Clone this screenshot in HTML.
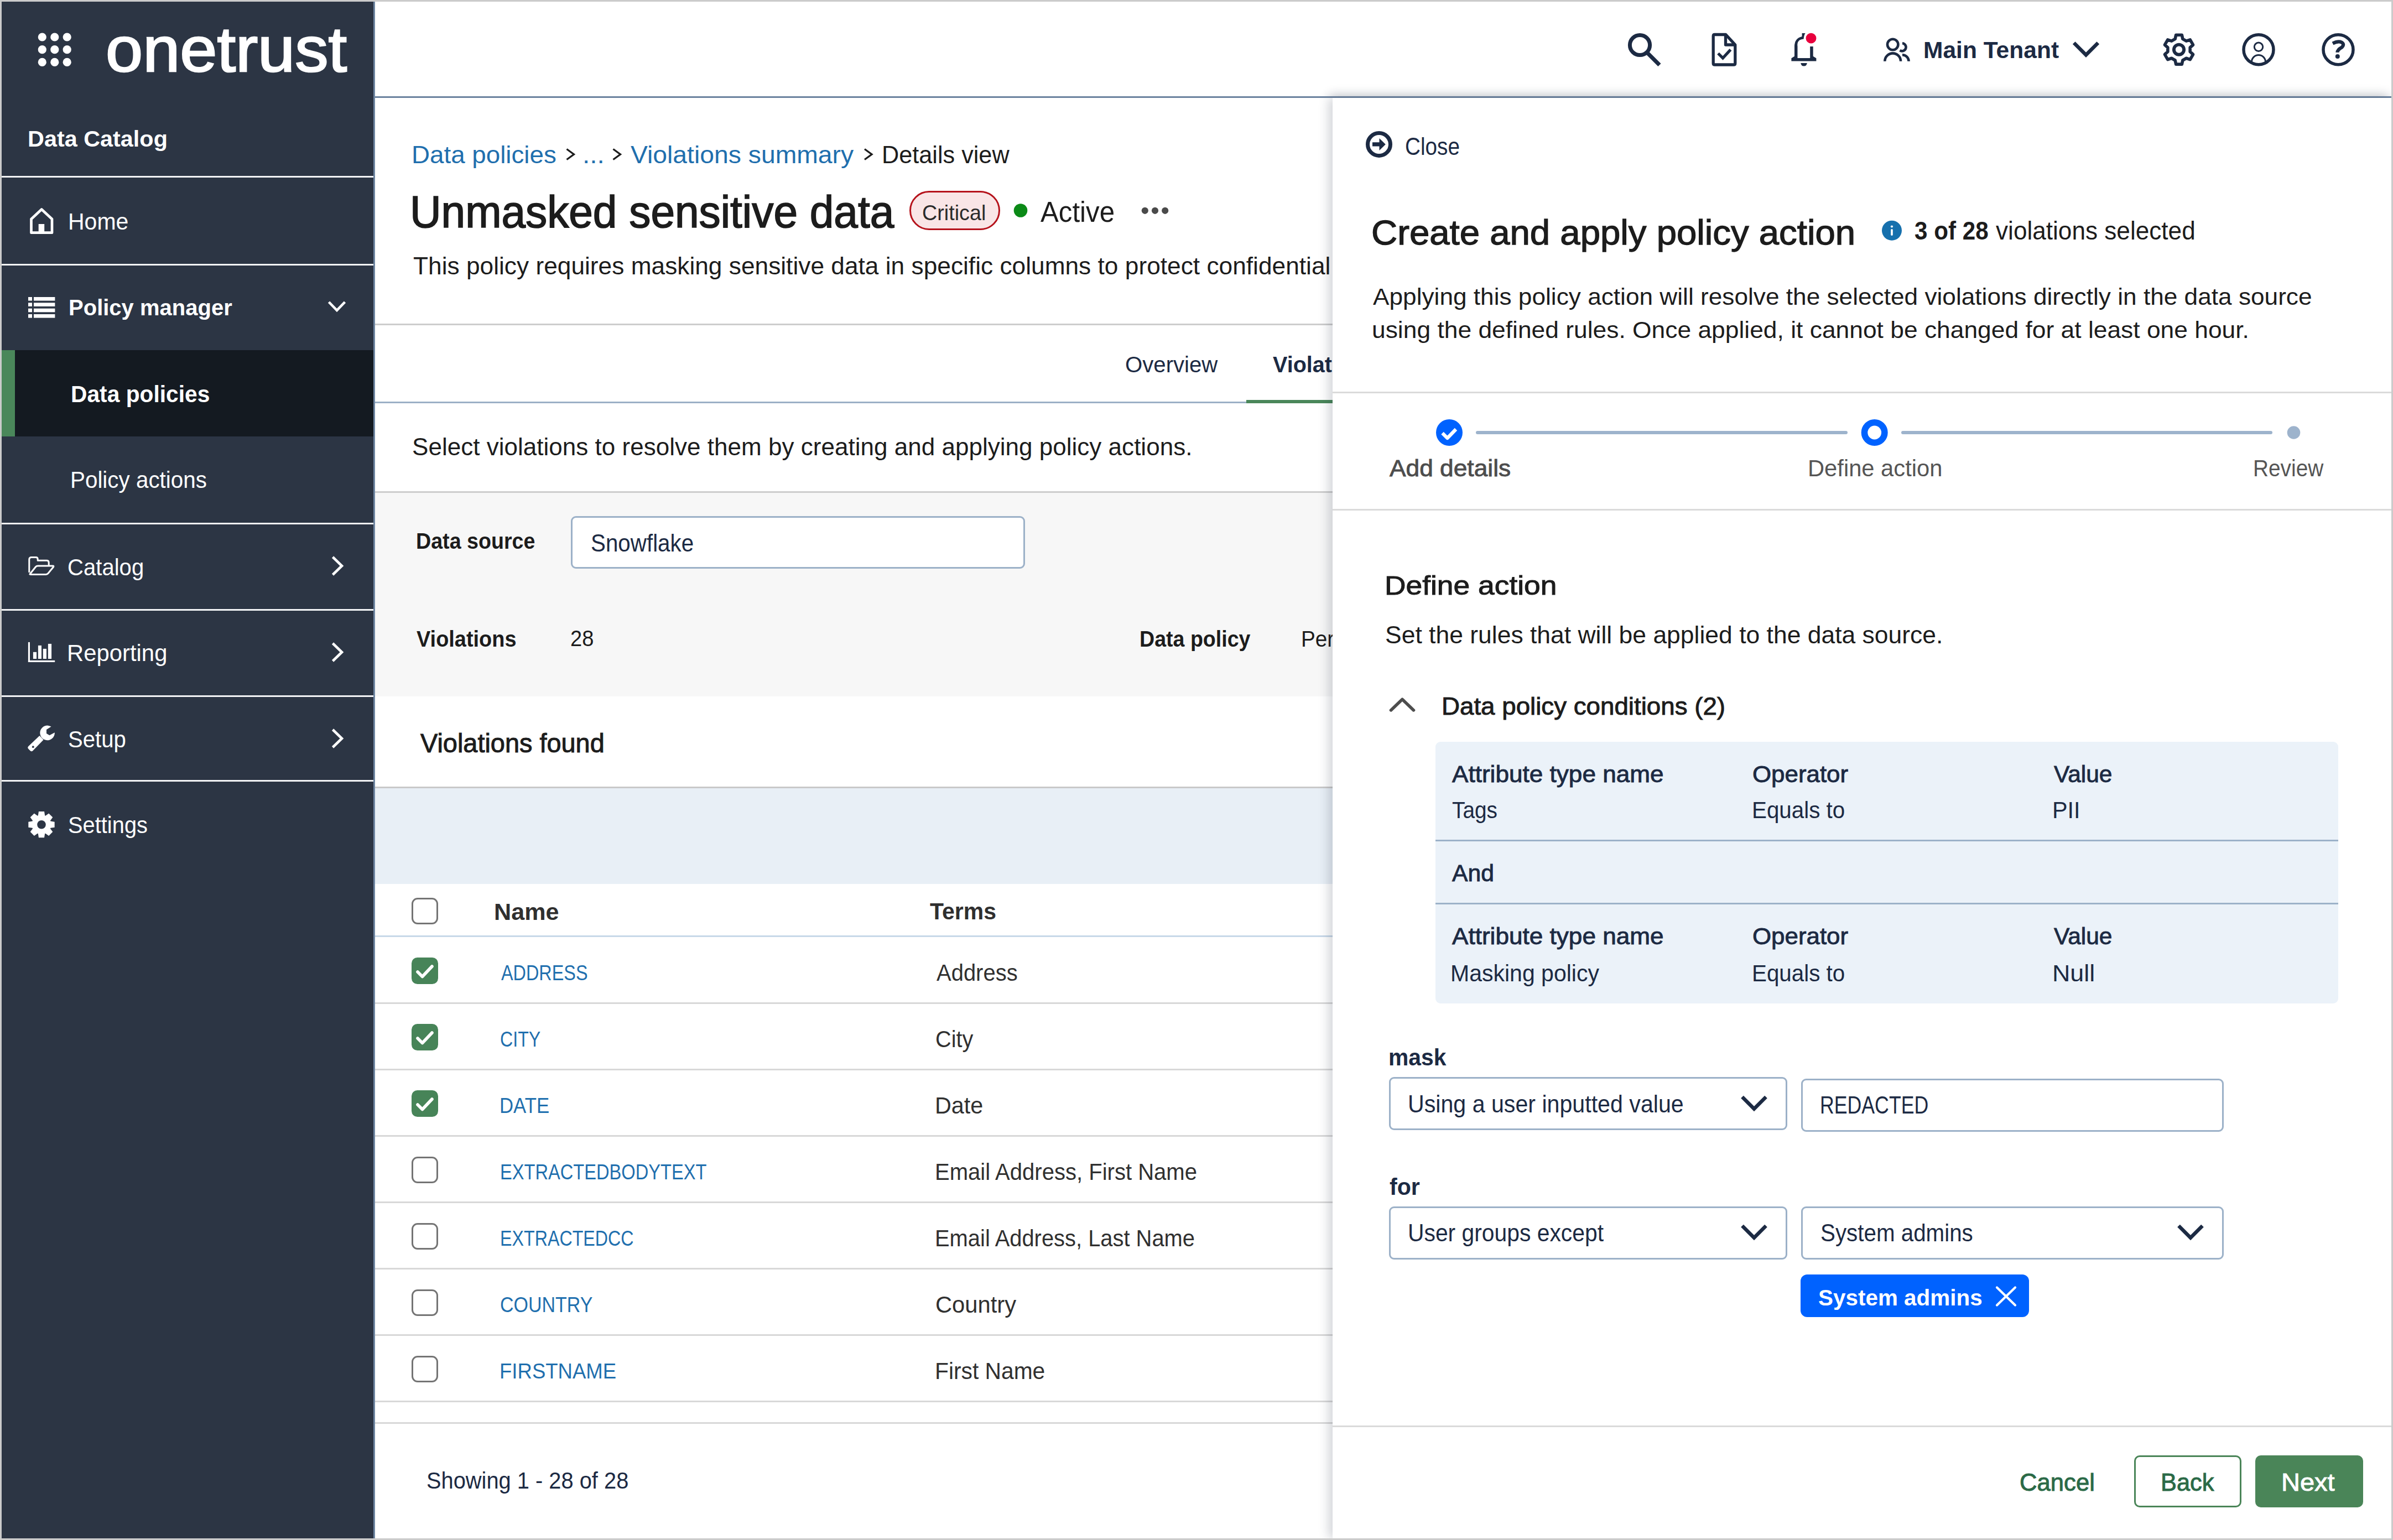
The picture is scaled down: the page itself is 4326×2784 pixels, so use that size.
<!DOCTYPE html><html><head><meta charset="utf-8"><style>html,body{margin:0;padding:0;}body{width:4326px;height:2784px;position:relative;overflow:hidden;background:#cbcbcb;font-family:"Liberation Sans",sans-serif;}.c{position:absolute;overflow:hidden;}.t{position:absolute;white-space:nowrap;margin:0;transform-origin:0 0;}</style></head><body><div style="position:absolute;left:3px;top:3px;width:4320px;height:2778px;overflow:hidden;"><div style="position:absolute;left:-3px;top:-3px;width:4326px;height:2784px;"><div class="c" style="left:3px;top:3px;width:675px;height:2778px;background:#2c3544;"><svg style="position:absolute;left:-3px;top:-3px;overflow:visible" width="200" height="200" viewBox="0 0 200 200"><circle cx="76.3" cy="67" r="7.6" fill="#fff"/><circle cx="76.3" cy="89.7" r="7.6" fill="#fff"/><circle cx="76.3" cy="112.4" r="7.6" fill="#fff"/><circle cx="98.8" cy="67" r="7.6" fill="#fff"/><circle cx="98.8" cy="89.7" r="7.6" fill="#fff"/><circle cx="98.8" cy="112.4" r="7.6" fill="#fff"/><circle cx="121.2" cy="67" r="7.6" fill="#fff"/><circle cx="121.2" cy="89.7" r="7.6" fill="#fff"/><circle cx="121.2" cy="112.4" r="7.6" fill="#fff"/></svg><div style="position:absolute;left:0px;top:315px;width:672px;height:3px;background:#f4f5f7;"></div><div style="position:absolute;left:0px;top:474px;width:672px;height:3px;background:#f4f5f7;"></div><div style="position:absolute;left:0px;top:942px;width:672px;height:3px;background:#f4f5f7;"></div><div style="position:absolute;left:0px;top:1098px;width:672px;height:3px;background:#f4f5f7;"></div><div style="position:absolute;left:0px;top:1254px;width:672px;height:3px;background:#f4f5f7;"></div><div style="position:absolute;left:0px;top:1407px;width:672px;height:3px;background:#f4f5f7;"></div><div style="position:absolute;left:0px;top:630px;width:672px;height:156px;background:#141a21;"></div><div style="position:absolute;left:0px;top:630px;width:24px;height:156px;background:#4a875a;"></div><svg style="position:absolute;left:0;top:0;overflow:visible" width="675" height="2778" viewBox="3 3 675 2778"><path d="M56.5 420.7 V396 L75.2 378.5 L94 396 V420.7 Z" fill="none" stroke="#fff" stroke-width="4.7" stroke-linejoin="round"/><rect x="69.7" y="405" width="10.5" height="14" fill="#fff"/><rect x="51" y="537" width="7" height="6.6" fill="#fff"/><rect x="61" y="537" width="38.4" height="6.6" fill="#fff"/><rect x="51" y="547.3" width="7" height="6.6" fill="#fff"/><rect x="61" y="547.3" width="38.4" height="6.6" fill="#fff"/><rect x="51" y="557.7" width="7" height="6.6" fill="#fff"/><rect x="61" y="557.7" width="38.4" height="6.6" fill="#fff"/><rect x="51" y="568" width="7" height="6.6" fill="#fff"/><rect x="61" y="568" width="38.4" height="6.6" fill="#fff"/><polyline points="594.5,546 609,561 623.5,546" fill="none" stroke="#fff" stroke-width="4.6"/><polyline points="601.5,1007 618,1023 601.5,1039" fill="none" stroke="#fff" stroke-width="4.6"/><polyline points="601.5,1163 618,1179 601.5,1195" fill="none" stroke="#fff" stroke-width="4.6"/><polyline points="601.5,1319 618,1335 601.5,1351" fill="none" stroke="#fff" stroke-width="4.6"/><g transform="translate(40,990)"><path d="M12.8 45 V21.5 Q12.8 17.5 16.8 17.5 H25 Q28.2 17.5 28.2 21 V23.3 H44.3 Q48.2 23.3 48.2 27.2 V33" fill="none" stroke="#fff" stroke-width="3" stroke-linejoin="round"/><path d="M14.3 47.5 L24.5 34.8 Q26 33 28.5 33 H55.5 Q57.7 33 56.5 35 L47 46.5 Q45.5 48.4 43 48.4 H16 Q13 48.4 14.3 47.5 Z" fill="none" stroke="#fff" stroke-width="3" stroke-linejoin="round"/></g><g transform="translate(40,1150)" fill="#fff"><rect x="10.9" y="10.9" width="3.1" height="36.1"/><rect x="10.9" y="43.9" width="48.3" height="3.1"/><rect x="19.9" y="28.8" width="6.2" height="12.2"/><rect x="28.9" y="16.9" width="6.1" height="24.1"/><rect x="37.8" y="22.9" width="6.2" height="18.1"/><rect x="46.9" y="13.9" width="6.2" height="27.1"/></g><g transform="translate(40,1300)"><path d="M52.6 13.6 A13.3 13.3 0 1 0 58.9 24.3 L49.5 29.3 L44 26 V19 Z" fill="#fff"/><path d="M31.5 30 L38.5 37.5 L19.5 57 Q17 59.5 14.5 57 L11.5 54 Q9 51.5 11.5 49 Z" fill="#fff"/><circle cx="19.8" cy="50.2" r="1.9" fill="#2c3544"/></g></svg><svg style="position:absolute;left:0;top:0;overflow:visible" width="675" height="2778" viewBox="3 3 675 2778"><path d="M68.84 1474.32 L69.96 1467.03 L80.04 1467.03 L81.16 1474.32 L82.22 1474.76 L88.17 1470.40 L95.30 1477.53 L90.94 1483.48 L91.38 1484.54 L98.67 1485.66 L98.67 1495.74 L91.38 1496.86 L90.94 1497.92 L95.30 1503.87 L88.17 1511.00 L82.22 1506.64 L81.16 1507.08 L80.04 1514.37 L69.96 1514.37 L68.84 1507.08 L67.78 1506.64 L61.83 1511.00 L54.70 1503.87 L59.06 1497.92 L58.62 1496.86 L51.33 1495.74 L51.33 1485.66 L58.62 1484.54 L59.06 1483.48 L54.70 1477.53 L61.83 1470.40 L67.78 1474.76 Z" fill="#fff"/><circle cx="75" cy="1490.7" r="7.8" fill="#2c3544"/></svg><div style="position:absolute;left:672px;top:0px;width:3px;height:2778px;background:#6d84a0;"></div><div class="t" style="left:187.8px;top:29.2px;font-size:115.00px;line-height:115.00px;font-weight:400;color:#fff;transform:scaleX(1.0496);-webkit-text-stroke:2.6px #fff;">onetrust</div><div class="t" style="left:47.0px;top:227.5px;font-size:40.70px;line-height:40.70px;font-weight:700;color:#fff;transform:scaleX(1.0170);">Data Catalog</div><div class="t" style="left:120.1px;top:376.9px;font-size:42.15px;line-height:42.15px;font-weight:400;color:#fff;transform:scaleX(0.9725);">Home</div><div class="t" style="left:121.0px;top:533.2px;font-size:40.70px;line-height:40.70px;font-weight:700;color:#fff;transform:scaleX(0.9835);">Policy manager</div><div class="t" style="left:125.1px;top:689.3px;font-size:42.15px;line-height:42.15px;font-weight:700;color:#fff;transform:scaleX(0.9668);">Data policies</div><div class="t" style="left:124.1px;top:844.3px;font-size:42.15px;line-height:42.15px;font-weight:400;color:#fff;transform:scaleX(0.9583);">Policy actions</div><div class="t" style="left:119.1px;top:1002.3px;font-size:42.15px;line-height:42.15px;font-weight:400;color:#fff;transform:scaleX(0.9516);">Catalog</div><div class="t" style="left:118.0px;top:1157.3px;font-size:42.15px;line-height:42.15px;font-weight:400;color:#fff;transform:scaleX(0.9928);">Reporting</div><div class="t" style="left:120.0px;top:1313.3px;font-size:42.15px;line-height:42.15px;font-weight:400;color:#fff;transform:scaleX(0.9518);">Setup</div><div class="t" style="left:120.1px;top:1468.3px;font-size:42.15px;line-height:42.15px;font-weight:400;color:#fff;transform:scaleX(0.9454);">Settings</div></div><div class="c" style="left:678px;top:3px;width:3645px;height:174px;background:#fff;"><div style="position:absolute;left:1731px;top:173px;width:1914px;height:300px;background:transparent;box-shadow:-5px -3px 20px rgba(30,40,60,0.2);"></div><div style="position:absolute;left:0px;top:171px;width:3645px;height:3px;background:#6b829e;"></div><svg style="position:absolute;left:0;top:0;overflow:visible" width="3645" height="174" viewBox="678 3 3645 174"><g transform="translate(2930,50)"><circle cx="34.5" cy="31.5" r="18.1" fill="none" stroke="#1c2a43" stroke-width="7"/><path d="M47.5 45 L70 67.5" stroke="#1c2a43" stroke-width="7.2"/></g><g transform="translate(3078,50)"><path d="M21.8 12.5 H41.8 L58.8 31 V64.4 Q58.8 67 56 67 H22 Q19.2 67 19.2 64.4 V15.2 Q19.2 12.5 21.8 12.5 Z" fill="none" stroke="#1c2a43" stroke-width="5.3" stroke-linejoin="round"/><path d="M41.5 13 V31 H58.5" fill="none" stroke="#1c2a43" stroke-width="5.3" stroke-linejoin="round"/><path d="M28 46.5 L36.5 55 L50.5 39.8" fill="none" stroke="#1c2a43" stroke-width="5.3"/></g><g transform="translate(3220,50)"><path d="M18.4 60.5 V55.2 L24 51.8 V34 Q24 19 37.6 15.9 V9.9 H43.6 Q41 13.5 40.6 20.5 Q27.6 21.5 29.5 34 V55 H52.2 V34 H57.7 V51.8 L63.4 55.2 V60.5 Z" fill="#1c2a43"/><path d="M35.3 64 H46.8 Q46 69.6 41 69.6 Q36 69.6 35.3 64 Z" fill="#1c2a43"/><circle cx="54" cy="19.2" r="9.4" fill="#e8003d"/></g><g transform="translate(3390,50)" fill="none" stroke="#1c2a43" stroke-width="4.6"><circle cx="31.7" cy="30.5" r="9.7"/><path d="M17.3 60.8 A14.4 14.4 0 0 1 46.1 60.8"/><path d="M49 28.3 A7 7 0 1 1 44.5 41"/><path d="M49 49.2 A11.6 11.6 0 0 1 60.6 60.8"/></g><polyline points="3749.2,77.5 3771,99.3 3792.8,77.5" fill="none" stroke="#1c2a43" stroke-width="6.6"/><g transform="translate(3900,50)"><path d="M32.16 20.37 L33.64 13.24 L44.36 13.24 L45.84 20.37 L52.32 24.12 L59.23 21.82 L64.60 31.11 L59.16 35.96 L59.16 43.44 L64.60 48.29 L59.23 57.58 L52.32 55.28 L45.84 59.03 L44.36 66.16 L33.64 66.16 L32.16 59.03 L25.68 55.28 L18.77 57.58 L13.40 48.29 L18.84 43.44 L18.84 35.96 L13.40 31.11 L18.77 21.82 L25.68 24.12 Z" fill="none" stroke="#1c2a43" stroke-width="5.6" stroke-linejoin="round"/><circle cx="39" cy="39.7" r="9.1" fill="none" stroke="#1c2a43" stroke-width="5.9"/></g><g transform="translate(4043,50)" fill="none" stroke="#1c2a43"><circle cx="40" cy="39.7" r="27" stroke-width="5.5"/><circle cx="40" cy="34.8" r="7.7" stroke-width="3"/><path d="M27.5 62 A12.5 12.5 0 0 1 52.5 62" stroke-width="3"/></g><g transform="translate(4187,50)"><circle cx="40" cy="39.7" r="27" fill="none" stroke="#1c2a43" stroke-width="5.5"/><path d="M30 28.5 Q40 23.5 46 26.5 Q52 30 46.5 35.5 Q38.5 40 38.5 44.8" fill="none" stroke="#1c2a43" stroke-width="6.2"/><circle cx="38.8" cy="52" r="4" fill="#1c2a43"/></g></svg><div class="t" style="left:2799.0px;top:67.3px;font-size:42.15px;line-height:42.15px;font-weight:700;color:#1c2a43;transform:scaleX(1.0097);">Main Tenant</div></div><div class="c" style="left:678px;top:177px;width:1731px;height:2604px;background:#fff;"><svg style="position:absolute;left:0;top:0;overflow:visible" width="1731" height="2604" viewBox="678 177 1731 2604"><polyline points="1024.5,269.5 1037.5,279 1024.5,288.5" fill="none" stroke="#1c1c1c" stroke-width="3.3"/><polyline points="1108.5,269.5 1121.5,279 1108.5,288.5" fill="none" stroke="#1c1c1c" stroke-width="3.3"/><polyline points="1563.0,269.5 1576.0,279 1563.0,288.5" fill="none" stroke="#1c1c1c" stroke-width="3.3"/><rect x="1645.5" y="346.5" width="161" height="68" rx="34" fill="#f9e5e6" stroke="#b5121b" stroke-width="3"/><circle cx="1845" cy="380.5" r="12.3" fill="#0b8a17"/><circle cx="2069.8" cy="380.8" r="6.1" fill="#4a4a4a"/><circle cx="2088" cy="380.8" r="6.1" fill="#4a4a4a"/><circle cx="2106.2" cy="380.8" r="6.1" fill="#4a4a4a"/></svg><div style="position:absolute;left:0px;top:408px;width:1731px;height:3px;background:#cdcdcd;"></div><div style="position:absolute;left:0px;top:549px;width:1731px;height:3px;background:#9bb0c6;"></div><div style="position:absolute;left:1575px;top:546px;width:160px;height:6px;background:#4a875a;"></div><div style="position:absolute;left:0px;top:711px;width:1731px;height:3px;background:#cdcdcd;"></div><div style="position:absolute;left:0px;top:714px;width:1731px;height:368px;background:#f7f7f7;"></div><div style="position:absolute;left:354px;top:756px;width:821px;height:95px;background:#fff;box-sizing:border-box;border:3px solid #9cb1c8;border-radius:9px;"></div><div style="position:absolute;left:0px;top:1245px;width:1731px;height:3px;background:#c9c9c9;"></div><div style="position:absolute;left:0px;top:1248px;width:1731px;height:173px;background:#e8eff6;"></div><div style="position:absolute;left:0px;top:1514px;width:1731px;height:3px;background:#c7d8e8;"></div><div style="position:absolute;left:0px;top:1635px;width:1731px;height:3px;background:#d8d8d8;"></div><div style="position:absolute;left:0px;top:1755px;width:1731px;height:3px;background:#d8d8d8;"></div><div style="position:absolute;left:0px;top:1875px;width:1731px;height:3px;background:#d8d8d8;"></div><div style="position:absolute;left:0px;top:1995px;width:1731px;height:3px;background:#d8d8d8;"></div><div style="position:absolute;left:0px;top:2115px;width:1731px;height:3px;background:#d8d8d8;"></div><div style="position:absolute;left:0px;top:2235px;width:1731px;height:3px;background:#d8d8d8;"></div><div style="position:absolute;left:0px;top:2355px;width:1731px;height:3px;background:#d8d8d8;"></div><svg style="position:absolute;left:0;top:0;overflow:visible" width="1731" height="2604" viewBox="678 177 1731 2604"><rect x="744" y="1731" width="48" height="48" rx="10.5" fill="#478458"/><polyline points="755,1757 763.5,1765.5 781,1747" fill="none" stroke="#fff" stroke-width="5.6" stroke-linecap="round" stroke-linejoin="round"/><rect x="744" y="1851" width="48" height="48" rx="10.5" fill="#478458"/><polyline points="755,1877 763.5,1885.5 781,1867" fill="none" stroke="#fff" stroke-width="5.6" stroke-linecap="round" stroke-linejoin="round"/><rect x="744" y="1971" width="48" height="48" rx="10.5" fill="#478458"/><polyline points="755,1997 763.5,2005.5 781,1987" fill="none" stroke="#fff" stroke-width="5.6" stroke-linecap="round" stroke-linejoin="round"/><rect x="745.5" y="2092.5" width="45" height="45" rx="9.5" fill="none" stroke="#747474" stroke-width="3"/><rect x="745.5" y="2212.5" width="45" height="45" rx="9.5" fill="none" stroke="#747474" stroke-width="3"/><rect x="745.5" y="2332.5" width="45" height="45" rx="9.5" fill="none" stroke="#747474" stroke-width="3"/><rect x="745.5" y="2452.5" width="45" height="45" rx="9.5" fill="none" stroke="#747474" stroke-width="3"/><rect x="745.5" y="1624.5" width="45" height="45" rx="9.5" fill="none" stroke="#747474" stroke-width="3"/></svg><div style="position:absolute;left:0px;top:2394px;width:1731px;height:3px;background:#d8d8d8;"></div><div class="t" style="left:66.4px;top:80.5px;font-size:44.33px;line-height:44.33px;font-weight:400;color:#1f6fae;transform:scaleX(1.0316);">Data policies</div><div class="t" style="left:374.7px;top:80.5px;font-size:44.33px;line-height:44.33px;font-weight:400;color:#1f6fae;transform:scaleX(1.0799);">...</div><div class="t" style="left:462.0px;top:80.5px;font-size:44.33px;line-height:44.33px;font-weight:400;color:#1f6fae;transform:scaleX(1.0445);">Violations summary</div><div class="t" style="left:915.8px;top:80.9px;font-size:44.19px;line-height:44.19px;font-weight:400;color:#1c1c1c;transform:scaleX(0.9783);">Details view</div><div class="t" style="left:63.2px;top:165.1px;font-size:81.40px;line-height:81.40px;font-weight:400;-webkit-text-stroke:1.71px #1c1c1c;color:#1c1c1c;transform:scaleX(0.9625);">Unmasked sensitive data</div><div class="t" style="left:989.4px;top:187.8px;font-size:39.24px;line-height:39.24px;font-weight:400;color:#2a2a2a;transform:scaleX(0.9615);">Critical</div><div class="t" style="left:1203.0px;top:179.7px;font-size:52.33px;line-height:52.33px;font-weight:400;color:#1c1c1c;transform:scaleX(0.9404);">Active</div><div class="t" style="left:69.0px;top:283.1px;font-size:43.61px;line-height:43.61px;font-weight:400;color:#1c1c1c;transform:scaleX(1.0151);">This policy requires masking sensitive data in specific columns to protect confidential</div><div class="t" style="left:1356.0px;top:461.5px;font-size:40.70px;line-height:40.70px;font-weight:400;color:#1c2a43;transform:scaleX(0.9871);">Overview</div><div class="t" style="left:1623.0px;top:461.5px;font-size:40.70px;line-height:40.70px;font-weight:700;color:#1c2a43;transform:scaleX(0.9728);">Violations</div><div class="t" style="left:67.0px;top:607.9px;font-size:45.06px;line-height:45.06px;font-weight:400;color:#1c1c1c;transform:scaleX(0.9779);">Select violations to resolve them by creating and applying policy actions.</div><div class="t" style="left:74.2px;top:780.5px;font-size:40.70px;line-height:40.70px;font-weight:700;color:#1c1c1c;transform:scaleX(0.9249);">Data source</div><div class="t" style="left:390.1px;top:783.6px;font-size:43.61px;line-height:43.61px;font-weight:400;color:#1c2a43;transform:scaleX(0.9251);">Snowflake</div><div class="t" style="left:75.0px;top:957.5px;font-size:40.70px;line-height:40.70px;font-weight:700;color:#1c1c1c;transform:scaleX(0.9320);">Violations</div><div class="t" style="left:353.1px;top:957.0px;font-size:40.70px;line-height:40.70px;font-weight:400;color:#1c1c1c;transform:scaleX(0.9369);">28</div><div class="t" style="left:1382.2px;top:957.5px;font-size:40.70px;line-height:40.70px;font-weight:700;color:#1c1c1c;transform:scaleX(0.9237);">Data policy</div><div class="t" style="left:1674.1px;top:957.5px;font-size:40.70px;line-height:40.70px;font-weight:400;color:#1c1c1c;transform:scaleX(0.9516);">Personal data</div><div class="t" style="left:82.0px;top:1143.4px;font-size:47.97px;line-height:47.97px;font-weight:400;-webkit-text-stroke:1.01px #1c1c1c;color:#1c1c1c;transform:scaleX(0.9772);">Violations found</div><div class="t" style="left:215.0px;top:1451.3px;font-size:42.15px;line-height:42.15px;font-weight:700;color:#2f2f2f;transform:scaleX(1.0239);">Name</div><div class="t" style="left:1003.0px;top:1450.3px;font-size:42.15px;line-height:42.15px;font-weight:700;color:#2f2f2f;transform:scaleX(0.9728);">Terms</div><div class="t" style="left:228.0px;top:1561.8px;font-size:39.24px;line-height:39.24px;font-weight:400;color:#1f6fae;transform:scaleX(0.8249);">ADDRESS</div><div class="t" style="left:1015.0px;top:1561.3px;font-size:42.15px;line-height:42.15px;font-weight:400;color:#303030;transform:scaleX(0.9484);">Address</div><div class="t" style="left:226.4px;top:1681.8px;font-size:39.24px;line-height:39.24px;font-weight:400;color:#1f6fae;transform:scaleX(0.8200);">CITY</div><div class="t" style="left:1013.1px;top:1681.3px;font-size:42.15px;line-height:42.15px;font-weight:400;color:#303030;transform:scaleX(0.9418);">City</div><div class="t" style="left:225.3px;top:1801.8px;font-size:39.24px;line-height:39.24px;font-weight:400;color:#1f6fae;transform:scaleX(0.8867);">DATE</div><div class="t" style="left:1012.1px;top:1801.3px;font-size:42.15px;line-height:42.15px;font-weight:400;color:#303030;transform:scaleX(0.9814);">Date</div><div class="t" style="left:225.5px;top:1921.8px;font-size:39.24px;line-height:39.24px;font-weight:400;color:#1f6fae;transform:scaleX(0.8316);">EXTRACTEDBODYTEXT</div><div class="t" style="left:1012.1px;top:1921.3px;font-size:42.15px;line-height:42.15px;font-weight:400;color:#303030;transform:scaleX(0.9503);">Email Address, First Name</div><div class="t" style="left:225.5px;top:2041.8px;font-size:39.24px;line-height:39.24px;font-weight:400;color:#1f6fae;transform:scaleX(0.8209);">EXTRACTEDCC</div><div class="t" style="left:1012.2px;top:2041.3px;font-size:42.15px;line-height:42.15px;font-weight:400;color:#303030;transform:scaleX(0.9466);">Email Address, Last Name</div><div class="t" style="left:226.3px;top:2161.8px;font-size:39.24px;line-height:39.24px;font-weight:400;color:#1f6fae;transform:scaleX(0.8665);">COUNTRY</div><div class="t" style="left:1013.0px;top:2161.3px;font-size:42.15px;line-height:42.15px;font-weight:400;color:#303030;transform:scaleX(0.9898);">Country</div><div class="t" style="left:225.2px;top:2281.8px;font-size:39.24px;line-height:39.24px;font-weight:400;color:#1f6fae;transform:scaleX(0.9316);">FIRSTNAME</div><div class="t" style="left:1012.1px;top:2281.3px;font-size:42.15px;line-height:42.15px;font-weight:400;color:#303030;transform:scaleX(0.9673);">First Name</div><div class="t" style="left:93.1px;top:2479.3px;font-size:42.15px;line-height:42.15px;font-weight:400;color:#1c2a43;transform:scaleX(0.9450);">Showing 1 - 28 of 28</div></div><div class="c" style="left:2409px;top:177px;width:1914px;height:2604px;background:#fff;box-shadow:-7px 0 18px rgba(30,40,60,0.2);"><svg style="position:absolute;left:0;top:0;overflow:visible" width="1914" height="2604" viewBox="2409 177 1914 2604"><g transform="translate(2453,220)"><circle cx="40" cy="40.9" r="20.5" fill="none" stroke="#1c2a43" stroke-width="7"/><path d="M28 37.2 H40.5 V29.9 L51.8 40.9 L40.5 51.9 V44.6 H28 Z" fill="#1c2a43"/></g><circle cx="3420" cy="416.7" r="18" fill="#1670ad"/><circle cx="3420" cy="409.5" r="2.1" fill="#fff"/><rect x="3418.2" y="414" width="3.6" height="12" rx="1.8" fill="#fff"/><circle cx="2620" cy="782" r="24" fill="#0062ff"/><polyline points="2607.5,783 2616.5,792 2632,776" fill="none" stroke="#fff" stroke-width="6.2" stroke-linejoin="round"/><line x1="2671" y1="782" x2="3337" y2="782" stroke="#9db3cc" stroke-width="6" stroke-linecap="round"/><circle cx="3388.7" cy="782" r="18.2" fill="#fff" stroke="#0062ff" stroke-width="11.6"/><line x1="3440" y1="782" x2="4105" y2="782" stroke="#9db3cc" stroke-width="6" stroke-linecap="round"/><circle cx="4146.5" cy="782" r="11.8" fill="#9db3cc"/><polyline points="2514.5,1283.9 2535,1264.3 2555.5,1283.9" fill="none" stroke="#4d4d4d" stroke-width="5.6" stroke-linecap="round" stroke-linejoin="round"/></svg><div style="position:absolute;left:0px;top:531px;width:1914px;height:3px;background:#dadada;"></div><div style="position:absolute;left:0px;top:743px;width:1914px;height:3px;background:#dadada;"></div><div style="position:absolute;left:186px;top:1164px;width:1632px;height:473px;background:#ebf2f9;border-radius:9px;"></div><div style="position:absolute;left:186px;top:1341px;width:1632px;height:3px;background:#9cb2c9;"></div><div style="position:absolute;left:186px;top:1455px;width:1632px;height:3px;background:#9cb2c9;"></div><div style="position:absolute;left:102px;top:1770px;width:720px;height:96px;background:#fff;box-sizing:border-box;border:3px solid #9cb1c8;border-radius:9px;"></div><div style="position:absolute;left:847px;top:1773px;width:764px;height:96px;background:#fff;box-sizing:border-box;border:3px solid #9cb1c8;border-radius:9px;"></div><div style="position:absolute;left:102px;top:2004px;width:720px;height:96px;background:#fff;box-sizing:border-box;border:3px solid #9cb1c8;border-radius:9px;"></div><div style="position:absolute;left:847px;top:2004px;width:764px;height:96px;background:#fff;box-sizing:border-box;border:3px solid #9cb1c8;border-radius:9px;"></div><div style="position:absolute;left:846px;top:2127px;width:413px;height:77px;background:#0062ff;border-radius:12px;"></div><svg style="position:absolute;left:0;top:0;overflow:visible" width="1914" height="2604" viewBox="2409 177 1914 2604"><polyline points="3149.5,1983 3171,2004.5 3192.5,1983" fill="none" stroke="#1c2a43" stroke-width="6.6"/><polyline points="3149.5,2216 3171,2237.5 3192.5,2216" fill="none" stroke="#1c2a43" stroke-width="6.6"/><polyline points="3938.5,2216 3960,2237.5 3981.5,2216" fill="none" stroke="#1c2a43" stroke-width="6.6"/><path d="M3610 2327.5 L3643 2359.5 M3643 2327.5 L3610 2359.5" stroke="#fff" stroke-width="4.2" stroke-linecap="round"/></svg><div style="position:absolute;left:0px;top:2400px;width:1914px;height:3px;background:#dadada;"></div><div style="position:absolute;left:1449px;top:2454px;width:194px;height:94px;background:#fff;box-sizing:border-box;border:3px solid #4a8558;border-radius:10px;"></div><div style="position:absolute;left:1668px;top:2454px;width:195px;height:94px;background:#4a8558;border-radius:10px;"></div><div class="t" style="left:131.2px;top:67.1px;font-size:43.61px;line-height:43.61px;font-weight:400;color:#1c2a43;transform:scaleX(0.8872);">Close</div><div class="t" style="left:69.9px;top:212.1px;font-size:62.50px;line-height:62.50px;font-weight:400;-webkit-text-stroke:1.31px #1c1c1c;color:#1c1c1c;transform:scaleX(1.0451);">Create and apply policy action</div><div class="t" style="left:1052.1px;top:216.6px;font-size:46.51px;line-height:46.51px;font-weight:700;color:#1c1c1c;transform:scaleX(0.9075);">3 of 28</div><div class="t" style="left:1199.0px;top:216.6px;font-size:46.51px;line-height:46.51px;font-weight:400;color:#1c1c1c;transform:scaleX(0.9493);">violations selected</div><div class="t" style="left:73.0px;top:339.3px;font-size:42.15px;line-height:42.15px;font-weight:400;color:#1c1c1c;transform:scaleX(1.0488);">Applying this policy action will resolve the selected violations directly in the data source</div><div class="t" style="left:70.9px;top:399.3px;font-size:42.15px;line-height:42.15px;font-weight:400;color:#1c1c1c;transform:scaleX(1.0528);">using the defined rules. Once applied, it cannot be changed for at least one hour.</div><div class="t" style="left:103.0px;top:649.3px;font-size:42.15px;line-height:42.15px;font-weight:400;-webkit-text-stroke:0.89px #4d4d4d;color:#4d4d4d;transform:scaleX(1.0510);">Add details</div><div class="t" style="left:859.0px;top:649.3px;font-size:42.15px;line-height:42.15px;font-weight:400;color:#555;transform:scaleX(0.9895);">Define action</div><div class="t" style="left:1664.2px;top:649.3px;font-size:42.15px;line-height:42.15px;font-weight:400;color:#555;transform:scaleX(0.9209);">Review</div><div class="t" style="left:93.7px;top:858.4px;font-size:47.97px;line-height:47.97px;font-weight:400;-webkit-text-stroke:1.01px #1c1c1c;color:#1c1c1c;transform:scaleX(1.1122);">Define action</div><div class="t" style="left:95.0px;top:947.9px;font-size:45.06px;line-height:45.06px;font-weight:400;color:#1c1c1c;transform:scaleX(0.9870);">Set the rules that will be applied to the data source.</div><div class="t" style="left:197.0px;top:1076.9px;font-size:45.06px;line-height:45.06px;font-weight:400;-webkit-text-stroke:0.95px #1c1c1c;color:#1c1c1c;transform:scaleX(1.0144);">Data policy conditions (2)</div><div class="t" style="left:216.0px;top:1202.3px;font-size:42.15px;line-height:42.15px;font-weight:400;-webkit-text-stroke:0.89px #1c2a43;color:#1c2a43;transform:scaleX(1.0468);">Attribute type name</div><div class="t" style="left:758.9px;top:1202.3px;font-size:42.15px;line-height:42.15px;font-weight:400;-webkit-text-stroke:0.89px #1c2a43;color:#1c2a43;transform:scaleX(1.0410);">Operator</div><div class="t" style="left:1304.0px;top:1202.3px;font-size:42.15px;line-height:42.15px;font-weight:400;-webkit-text-stroke:0.89px #1c2a43;color:#1c2a43;transform:scaleX(1.0076);">Value</div><div class="t" style="left:216.0px;top:1267.3px;font-size:42.15px;line-height:42.15px;font-weight:400;color:#1c2a43;transform:scaleX(0.9211);">Tags</div><div class="t" style="left:758.1px;top:1267.3px;font-size:42.15px;line-height:42.15px;font-weight:400;color:#1c2a43;transform:scaleX(0.9576);">Equals to</div><div class="t" style="left:1301.1px;top:1267.3px;font-size:42.15px;line-height:42.15px;font-weight:400;color:#1c2a43;transform:scaleX(0.9818);">PII</div><div class="t" style="left:216.0px;top:1495.3px;font-size:42.15px;line-height:42.15px;font-weight:400;-webkit-text-stroke:0.89px #1c2a43;color:#1c2a43;transform:scaleX(1.0468);">Attribute type name</div><div class="t" style="left:758.9px;top:1495.3px;font-size:42.15px;line-height:42.15px;font-weight:400;-webkit-text-stroke:0.89px #1c2a43;color:#1c2a43;transform:scaleX(1.0410);">Operator</div><div class="t" style="left:1304.0px;top:1495.3px;font-size:42.15px;line-height:42.15px;font-weight:400;-webkit-text-stroke:0.89px #1c2a43;color:#1c2a43;transform:scaleX(1.0076);">Value</div><div class="t" style="left:213.1px;top:1562.3px;font-size:42.15px;line-height:42.15px;font-weight:400;color:#1c2a43;transform:scaleX(0.9733);">Masking policy</div><div class="t" style="left:758.1px;top:1562.3px;font-size:42.15px;line-height:42.15px;font-weight:400;color:#1c2a43;transform:scaleX(0.9576);">Equals to</div><div class="t" style="left:1300.8px;top:1562.3px;font-size:42.15px;line-height:42.15px;font-weight:400;color:#1c2a43;transform:scaleX(1.0635);">Null</div><div class="t" style="left:216.0px;top:1381.3px;font-size:42.15px;line-height:42.15px;font-weight:400;-webkit-text-stroke:0.89px #1c2a43;color:#1c2a43;transform:scaleX(1.0132);">And</div><div class="t" style="left:101.1px;top:1714.3px;font-size:42.15px;line-height:42.15px;font-weight:700;color:#1c2a43;transform:scaleX(0.9686);">mask</div><div class="t" style="left:136.2px;top:1798.1px;font-size:43.61px;line-height:43.61px;font-weight:400;color:#1c2a43;transform:scaleX(0.9436);">Using a user inputted value</div><div class="t" style="left:880.5px;top:1800.1px;font-size:43.61px;line-height:43.61px;font-weight:400;color:#1c2a43;transform:scaleX(0.8181);">REDACTED</div><div class="t" style="left:103.0px;top:1948.3px;font-size:42.15px;line-height:42.15px;font-weight:700;color:#1c2a43;transform:scaleX(0.9772);">for</div><div class="t" style="left:136.2px;top:2031.1px;font-size:43.61px;line-height:43.61px;font-weight:400;color:#1c2a43;transform:scaleX(0.9363);">User groups except</div><div class="t" style="left:882.1px;top:2031.1px;font-size:43.61px;line-height:43.61px;font-weight:400;color:#1c2a43;transform:scaleX(0.9251);">System admins</div><div class="t" style="left:878.0px;top:2148.5px;font-size:40.70px;line-height:40.70px;font-weight:700;color:#fff;transform:scaleX(0.9937);">System admins</div><div class="t" style="left:1242.1px;top:2479.9px;font-size:45.06px;line-height:45.06px;font-weight:400;-webkit-text-stroke:0.95px #2b6a47;color:#2b6a47;transform:scaleX(0.9688);">Cancel</div><div class="t" style="left:1497.1px;top:2479.9px;font-size:45.06px;line-height:45.06px;font-weight:400;-webkit-text-stroke:0.95px #2b6a47;color:#2b6a47;transform:scaleX(0.9629);">Back</div><div class="t" style="left:1714.9px;top:2479.9px;font-size:45.06px;line-height:45.06px;font-weight:400;-webkit-text-stroke:0.95px #fff;color:#fff;transform:scaleX(1.0432);">Next</div></div></div></div></body></html>
